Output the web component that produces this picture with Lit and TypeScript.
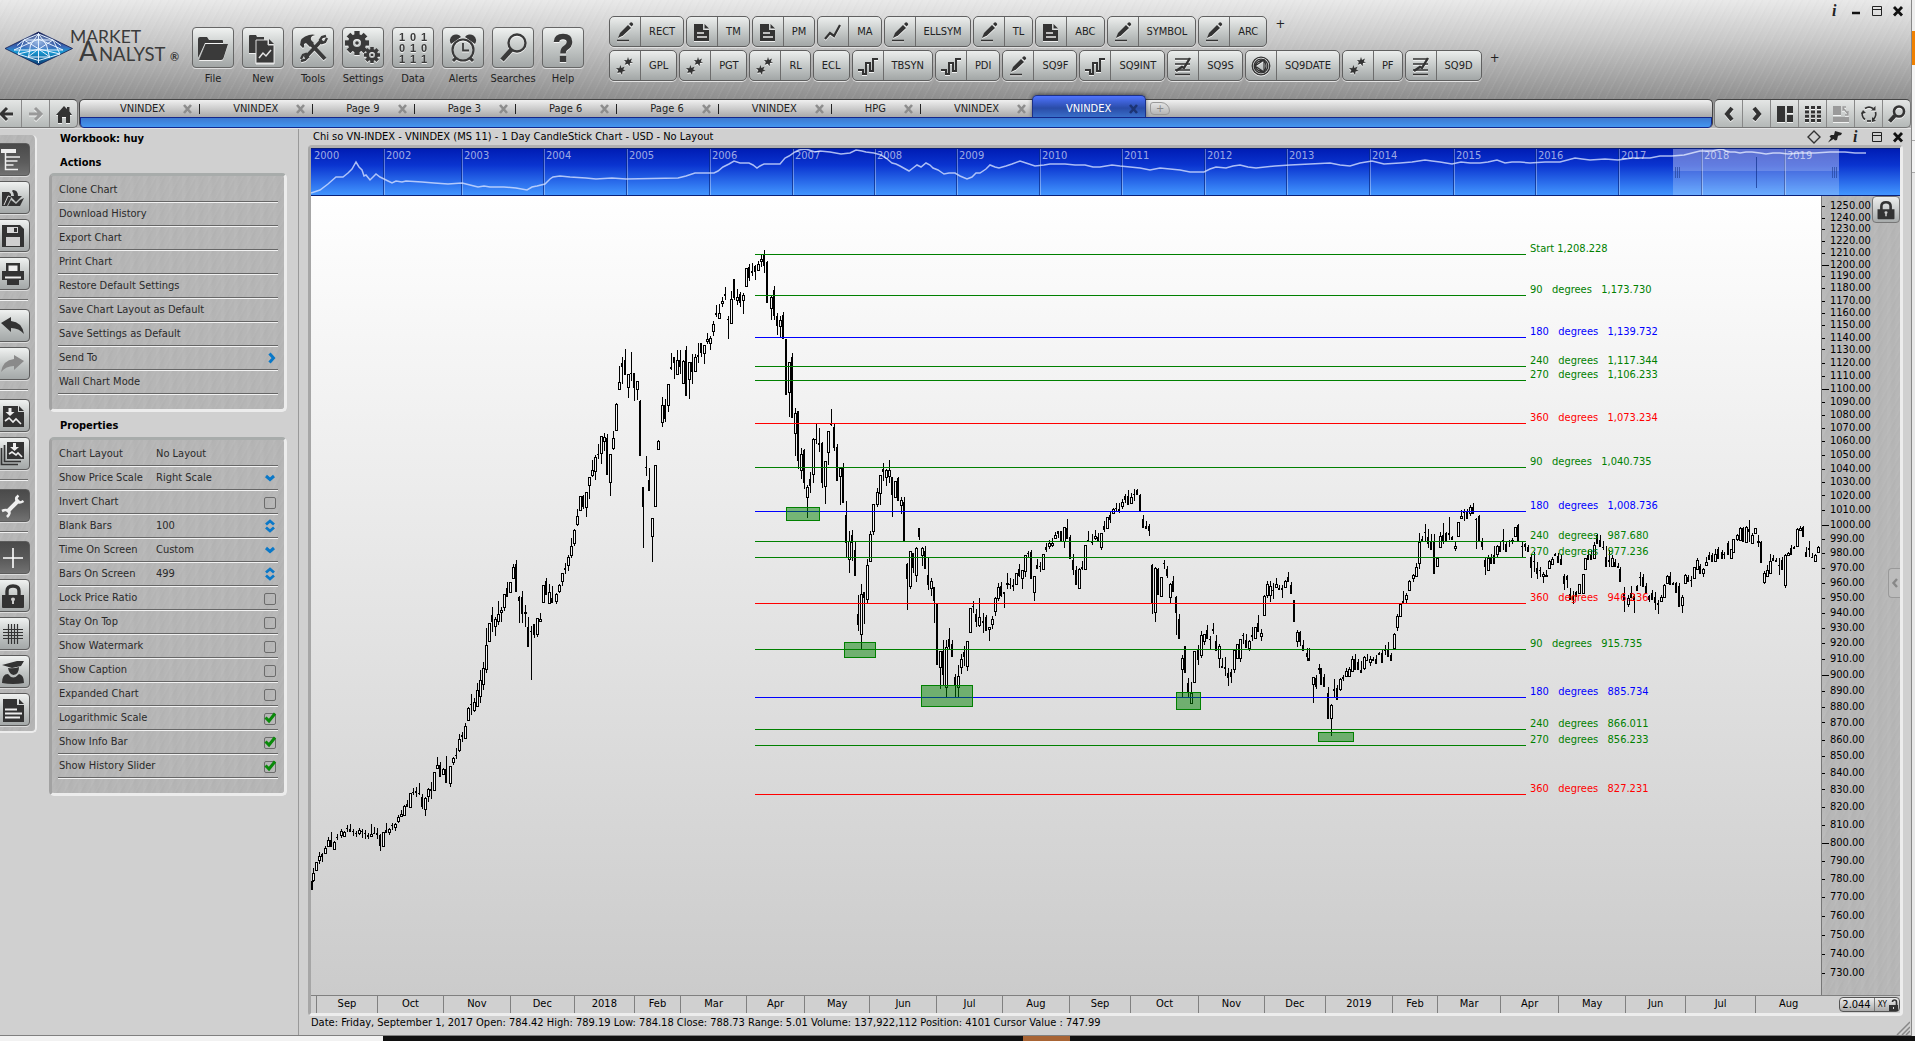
import { LitElement, html, svg, css, nothing, TemplateResult } from "lit";
import { customElement } from "lit/decorators.js";
import { classMap } from "lit/directives/class-map.js";
import { styleMap } from "lit/directives/style-map.js";

/* ---------- icons ---------- */

const icon = (w: number, h: number, body: unknown, box = `0 0 ${w} ${h}`) =>
  html`<svg class="ico" width=${w} height=${h} viewBox=${box} aria-hidden="true">${body}</svg>`;

const cog = (cx: number, cy: number, r: number, hole: number, teeth: number) => {
  const out = [];
  for (let i = 0; i < teeth; i++) {
    out.push(svg`<rect x=${cx - r * 0.22} y=${cy - r} width=${r * 0.44} height=${r * 0.5}
      transform=${`rotate(${(360 / teeth) * i} ${cx} ${cy})`} />`);
  }
  return svg`<g fill="#3a3a3a">${out}</g>
    <circle cx=${cx} cy=${cy} r=${(r * 0.76 + hole) / 2} fill="none" stroke="#3a3a3a" stroke-width=${r * 0.76 - hole} />
    <circle cx=${cx} cy=${cy} r=${hole * 0.45} fill="#3a3a3a" />`;
};

const I: Record<string, TemplateResult> = {
  file: icon(32, 32, svg`<path fill="#3a3a3a" d="M1 7q0-2 2-2h7l2 3h13q1 0 1 1v2H8L3 22 1 26z"/><path fill="#3a3a3a" d="M8.500 12H31L26.500 26q-.5 2-2.500 2H2z"/>`),
  fresh: icon(32, 32, svg`<path fill="#3a3a3a" d="M2 4q0-1 1-1h6l1 2h7v4h-6v12H2z"/><path fill="#3a3a3a" stroke="#ddd" stroke-width="1" d="M9 8h12v5h6v18H9z"/><path fill="#3a3a3a" d="M22 7l5 5h-5z"/><path fill="none" stroke="#e6e6e6" stroke-width="1.500" d="M12 26l4-5 3 3 5-6"/>`),
  tools: icon(32, 32, svg`<g fill="none" stroke="#3a3a3a"><path stroke-width="4" d="M13 11L28 27"/><path stroke-width="3.600" d="M25 8L8 26"/><path stroke-width="2.400" d="M29 4l-4 1-2 3 2 3 3-1 2-4M4 29l4-1 3-3-2-3-3 1-2 4"/></g><path fill="#3a3a3a" d="M3 13q0-8 9-10 4-1 6 0-5 1-4 5l3 3-4 4-4-4-2 1v3l-1 1z"/>`),
  settings: icon(36, 34, svg`${cog(12, 12, 12, 4, 8)}${cog(27, 24, 8, 3, 8)}`),
  data: icon(32, 34, svg`<g fill="#3a3a3a" font-family="Liberation Sans, sans-serif" font-weight="700" font-size="11" text-anchor="middle"><text x="5" y="10">1</text><text x="16" y="10">0</text><text x="27" y="10">1</text><text x="5" y="21">0</text><text x="16" y="21">1</text><text x="27" y="21">0</text><text x="5" y="32">1</text><text x="16" y="32">1</text><text x="27" y="32">1</text></g>`),
  alerts: icon(32, 32, svg`<circle cx="16" cy="18" r="10.500" fill="none" stroke="#3a3a3a" stroke-width="2.200"/><path fill="none" stroke="#3a3a3a" stroke-width="1.800" d="M16 11v7.500h6"/><path fill="#3a3a3a" d="M4 12a6 6 0 0 1 10-7zM28 12a6 6 0 0 0-10-7z"/><path stroke="#3a3a3a" stroke-width="3" d="M6 29l3-3M26 29l-3-3"/>`),
  search: icon(32, 32, svg`<circle cx="20" cy="11" r="8.500" fill="none" stroke="#3a3a3a" stroke-width="2.400"/><path stroke="#3a3a3a" stroke-width="4.600" d="M5 28l10-11"/>`),
  help: icon(32, 32, svg`<path fill="none" stroke="#3a3a3a" stroke-width="5.600" d="M9.500 10Q9.500 4.500 16 4.500T22.500 10q0 3.500-4 6-2.500 1.500-2.500 5.500"/><path fill="#3a3a3a" d="M12.800 24h6.400v6h-6.400z"/>`),
  pencil: icon(20, 20, svg`<path fill="#333" d="M3 16l2-5 8-8 3 3-8 7.500z"/><path fill="#333" d="M14 2l1.500-1.500q1-.5 2 .5t.5 2L16.500 4.500z"/><path stroke="#333" stroke-width="1.500" d="M2 18.500h12"/>`),
  note: icon(20, 20, svg`<path fill="#333" d="M2 2h9v6h6v11H2z"/><path fill="#333" d="M12.500 2l4.500 4.500h-4.500z"/><path stroke="#eee" stroke-width="1.500" d="M5 11h7M5 15h10"/>`),
  zigzag: icon(20, 20, svg`<path fill="none" stroke="#333" stroke-width="2.200" d="M2 17l5-6 4 3 6-11"/>`),
  stars: icon(20, 20, svg`<path fill="#333" d="M13 1l1 3 3-1.500-1.200 3L18 6.500l-3 .6-.5 3.400-1.700-2.700-3 1 1-2.900L9 4l3 .2zM5.500 9l.8 3 3.200-1.200-1.200 2.700L10.500 15l-2.900.6L7 19l-1.700-2.700L2.300 17l1-2.700L1 12l3.300.2z"/>`),
  square: icon(22, 20, svg`<path fill="none" stroke="#333" stroke-width="2" d="M1 14h5v4h3V7h4v8h3V3h5"/>`),
  levels: icon(20, 20, svg`<path stroke="#333" stroke-width="1.400" d="M2 3h15M2 8h15M2 14h15M2 18.500h15"/><path fill="none" stroke="#333" stroke-width="2.400" d="M3 15l6-4 2 1 6-10"/>`),
  orbit: icon(20, 20, svg`<g fill="none" stroke="#333" stroke-width="1.300"><circle cx="10" cy="10" r="8.800"/><circle cx="10" cy="10" r="6.800"/><path d="M4 10l9-6v12zM13 4q4 6 0 12M4 10q1-5 9-6M4 10q1 5 9 6"/></g>`),
  info: icon(12, 14, svg`<text x="3" y="12" fill="#222" font-family="Liberation Serif, serif" font-style="italic" font-weight="700" font-size="16">i</text>`),
  min: icon(12, 14, svg`<path stroke="#111" stroke-width="2.500" d="M2 9h8"/>`),
  max: icon(12, 14, svg`<path fill="none" stroke="#222" d="M1.500 2.500h9v9h-9zM1 5.500h10"/>`),
  close: icon(12, 14, svg`<path stroke="#111" stroke-width="2.800" d="M2 3l8 8.500M10 3l-8 8.500"/>`),
  diamond: icon(14, 14, svg`<path fill="none" stroke="#333" stroke-width="1.400" d="M7 1l6 6-6 6-6-6z"/>`),
  pin: icon(16, 14, svg`<path fill="#222" d="M8 1l7 2-1 2-3 .8-1 4.200-2 .5L6.500 9 1 12.500 4 8 2.500 6.500 4 5h3z"/>`),
  back: icon(16, 18, svg`<path fill="none" stroke="#333" stroke-width="3" d="M9 3L3 9l6 6M3 9h12"/>`),
  fwd: icon(16, 18, svg`<path fill="none" stroke="#999" stroke-width="3" d="M7 3l6 6-6 6M13 9H1"/>`),
  home: icon(18, 18, svg`<path fill="#333" d="M9 1l3 3V2h2.500v4.500L17 10h-2v8h-4v-6H7v6H3v-8H1z"/>`),
  left: icon(14, 18, svg`<path fill="none" stroke="#333" stroke-width="4" d="M10 3L5 9l5 6"/>`),
  right: icon(14, 18, svg`<path fill="none" stroke="#333" stroke-width="4" d="M4 3l5 6-5 6"/>`),
  tiles: icon(18, 16, svg`<path fill="#333" d="M1 0h8v16H1zM11 0h6v7h-6zM11 9h6v7h-6z"/>`),
  grid: icon(18, 16, svg`<path fill="#333" d="M1 0h4v3H1zM7 0h4v3H7zM13 0h4v3h-4zM1 4.400h4v3H1zM7 4.400h4v3H7zM13 4.400h4v3h-4zM1 8.700h4v3H1zM7 8.700h4v3H7zM13 8.700h4v3h-4zM1 13h4v3H1zM7 13h4v3H7zM13 13h4v3h-4z"/>`),
  snap: icon(18, 16, svg`<path fill="#9a9a9a" d="M1 0h8v9H1zM1 11h16v5H1z"/><path fill="none" stroke="#9a9a9a" stroke-width="1.300" d="M11 2l5 6M11 5V1h3M16 5v4h-3"/>`),
  cycle: icon(18, 18, svg`<g fill="none" stroke="#333" stroke-width="1.700"><path d="M5 3.500a7 7 0 0 1 8 0M15.500 7a7 7 0 0 1-2.500 7.500M2.500 7A7 7 0 0 0 5 14.500"/><path d="M7 16h4"/></g><path fill="#333" d="M11 5.500h4.500V1zM12 12v5l4-1zM1 9l2-4 3 3z"/>`),
  find: icon(18, 18, svg`<circle cx="11" cy="6.500" r="5" fill="none" stroke="#333" stroke-width="2.600"/><path stroke="#333" stroke-width="4" d="M1.500 16.500L7 10.500"/>`),
  tree: icon(26, 24, svg`<path fill="#eee" d="M1 1h15v4H1z"/><path fill="none" stroke="#eee" stroke-width="1.500" d="M5.500 5v16.500H18M5.500 9H20M5.500 13h12M5.500 17h8"/>`),
  export: icon(26, 24, svg`<path fill="#333" d="M2 6h7l2 2v4l-4 8H2z"/><path fill="none" stroke="#ddd" stroke-width="1" d="M4 19l4-9 4 1 2 4"/><path fill="#333" d="M13 4q5 0 5 6h4l-6 6-6-6h4q0-3-2-5zM11 14l5 4 4-4 4-2-4 8H8z"/>`),
  save: icon(26, 24, svg`<path fill="#333" d="M2 1h18l4 4v18H2z"/><path fill="#d8d8d8" d="M7 3h11v6H7z"/><path fill="#333" d="M14 4h3v4h-3z"/><path fill="#cfcfcf" d="M6 13h14v9H6z"/>`),
  print: icon(26, 24, svg`<path fill="#333" d="M6 1h14v8h4v9H2V9h4z"/><path fill="#eee" d="M8.500 3.500h9V9h-9zM5 14.500h16v2H5z"/><path fill="#333" d="M7 17h12v6H7z"/>`),
  undo: icon(26, 24, svg`<path fill="#333" d="M1 9l10-6v4q11 1 13 13-5-6-13-6v4z"/>`),
  redo: icon(26, 24, svg`<path fill="#8a8a8a" d="M24 9L14 3v4Q3 8 1 20q5-6 13-6v4z"/>`),
  down: icon(26, 24, svg`<path fill="#333" d="M3 2h15v6h6v15H3zM19 2l5 5h-5z"/><path fill="#eee" d="M8.500 4h3v4h3L10 12 5.500 8h3z"/><path fill="none" stroke="#eee" stroke-width="1.600" d="M5 17l4-3 4 4 3-3 5 5"/>`),
  downall: icon(26, 24, svg`<path fill="none" stroke="#333" stroke-width="1.700" d="M1.500 6v16.500H18M4.500 3v16.500H21"/><path fill="#333" d="M7 0h17v17H7z"/><path fill="#eee" d="M13 1h3v4h3l-4.500 4L10 5h3z"/><path fill="none" stroke="#eee" stroke-width="1.600" d="M9 12l3-2 4 3 2-2 4 4"/>`),
  wrench: icon(26, 24, svg`<path stroke="#eee" stroke-width="4" d="M7 18L19 6"/><path fill="none" stroke="#eee" stroke-width="2.600" d="M18.500 1.500Q15 4 17 7t6.500 0M2 17q4-2 6.500 0T7 23"/>`),
  plus: icon(26, 24, svg`<path stroke="#fff" stroke-width="1.600" d="M3 12h20M13 2v20"/>`),
  lock: icon(26, 24, svg`<path fill="none" stroke="#333" stroke-width="3.400" d="M7 12V7q0-5 6-5t6 5v5"/><path fill="#333" d="M2 11h22v12q0 1-1 1H3q-1 0-1-1z"/><path fill="#ccc" d="M11 15q0-1.500 2-1.500t2 1.500-1 2v3h-2v-3q-1-.5-1-2z"/>`),
  mesh: icon(26, 24, svg`<path stroke="#333" stroke-width="1.200" d="M3 7.500h20M3 10.500h20M3 13.500h20M3 16.500h20M8.500 2v20M11.500 2v20M14.500 2v20M17.500 2v20"/>`),
  grad: icon(26, 24, svg`<path fill="#333" d="M2 5l15-4h7l-3 5-9 2zM8 8q6 1 11-1 0 7-5.500 8Q9 14 8 8zM2 23q0-9 6-9 5 7 11 0 5 1 5 9-11 2-22 0z"/>`),
  page: icon(26, 24, svg`<path fill="#333" d="M3 1h14v6h7v17H3zM19 1l5 5h-5z"/><path stroke="#eee" stroke-width="1.800" d="M5 11.500h12M5 15.500h17M5 19.500h15"/>`),
  chevR: icon(10, 12, svg`<path fill="none" stroke="#0a78c8" stroke-width="3" d="M2.500 1.500L6.500 6l-4 4.500"/>`),
  chevD: icon(12, 12, svg`<path fill="none" stroke="#0a78c8" stroke-width="3" d="M2 4l4 3.500L10 4"/>`),
  spin: icon(10, 14, svg`<path fill="none" stroke="#0a78c8" stroke-width="2.800" d="M1 5.500L5 2l4 3.500M1 8.500L5 12l4-3.500"/>`),
  tick: icon(12, 12, svg`<path fill="none" stroke="#0a8a0a" stroke-width="3" d="M1.500 5.500l3.500 3.500 6-7.500"/>`),
  x: icon(12, 12, svg`<path class="xs" stroke="#8d8d8d" stroke-width="2.600" d="M2 2l7 8M9 2l-7 8"/>`),
};

/* ---------- data ---------- */

const TOOLS = [
  ["File", "file"], ["New", "fresh"], ["Tools", "tools"], ["Settings", "settings"],
  ["Data", "data"], ["Alerts", "alerts"], ["Searches", "search"], ["Help", "help"],
];

const QUICK = [
  [["RECT", "pencil"], ["TM", "note"], ["PM", "note"], ["MA", "zigzag"], ["ELLSYM", "pencil"], ["TL", "pencil"], ["ABC", "note"], ["SYMBOL", "pencil"], ["ARC", "pencil"]],
  [["GPL", "stars"], ["PGT", "stars"], ["RL", "stars"], ["ECL", ""], ["TBSYN", "square"], ["PDI", "square"], ["SQ9F", "pencil"], ["SQ9INT", "square"], ["SQ9S", "levels"], ["SQ9DATE", "orbit"], ["PF", "stars"], ["SQ9D", "levels"]],
];

const TABS = ["VNINDEX", "VNINDEX", "Page 9", "Page 3", "Page 6", "Page 6", "VNINDEX", "HPG", "VNINDEX", "VNINDEX"];

const STRIP = [
  ["tree!", "export", "save", "print"], ["undo", "redo"], ["down", "downall"], ["wrench!"],
  ["plus!", "lock", "mesh", "grad", "page"],
];

const ACTIONS = ["Clone Chart", "Download History", "Export Chart", "Print Chart", "Restore Default Settings", "Save Chart Layout as Default", "Save Settings as Default", "Send To", "Wall Chart Mode"];

type Prop = { label: string; kind: "text" | "select" | "number" | "check"; value: string };
const PROPS: Prop[] = [
  { label: "Chart Layout", kind: "text", value: "No Layout" },
  { label: "Show Price Scale", kind: "select", value: "Right Scale" },
  { label: "Invert Chart", kind: "check", value: "" },
  { label: "Blank Bars", kind: "number", value: "100" },
  { label: "Time On Screen", kind: "select", value: "Custom" },
  { label: "Bars On Screen", kind: "number", value: "499" },
  { label: "Lock Price Ratio", kind: "check", value: "" },
  { label: "Stay On Top", kind: "check", value: "" },
  { label: "Show Watermark", kind: "check", value: "" },
  { label: "Show Caption", kind: "check", value: "" },
  { label: "Expanded Chart", kind: "check", value: "" },
  { label: "Logarithmic Scale", kind: "check", value: "on" },
  { label: "Show Info Bar", kind: "check", value: "on" },
  { label: "Show History Slider", kind: "check", value: "on" },
];

/* Plot space shared by the price pane: origin and extent in drawing units. */
const PX = 311, PY = 196, PW = 1510, PH = 799;
const pct = (v: number, from: number, span: number) => `${((v - from) / span) * 100}%`;
const priceY = (p: number) => 206.3 + 1426 * Math.log(1250 / p);

const LEVELS: [number, string, string][] = [
  [254, "green", "Start 1,208.228"], [295, "green", "90   degrees   1,173.730"], [337, "blue", "180   degrees   1,139.732"],
  [366, "green", "240   degrees   1,117.344"], [380, "green", "270   degrees   1,106.233"], [423, "red", "360   degrees   1,073.234"],
  [467, "green", "90   degrees   1,040.735"], [511, "blue", "180   degrees   1,008.736"], [541, "green", "240   degrees   987.680"],
  [557, "green", "270   degrees   977.236"], [603, "red", "360   degrees   946.236"], [649, "green", "90   degrees   915.735"],
  [697, "blue", "180   degrees   885.734"], [729, "green", "240   degrees   866.011"], [745, "green", "270   degrees   856.233"],
  [794, "red", "360   degrees   827.231"],
];
const INK: Record<string, string> = { green: "#008000", blue: "#0000ff", red: "#ff0000" };

const ZONES = [[786, 507, 33, 13], [844, 642, 31, 15], [921, 685, 51, 21], [1176, 692, 24, 17], [1318, 732, 35, 9]];

const MONTHS: [string, number][] = [
  ["", 5], ["Sep", 61], ["Oct", 66], ["Nov", 67], ["Dec", 64], ["2018", 60], ["Feb", 46], ["Mar", 66], ["Apr", 58], ["May", 65],
  ["Jun", 67], ["Jul", 66], ["Aug", 67], ["Sep", 61], ["Oct", 68], ["Nov", 66], ["Dec", 61], ["2019", 67], ["Feb", 45],
  ["Mar", 63], ["Apr", 58], ["May", 67], ["Jun", 60], ["Jul", 70], ["Aug", 66],
];

const YEARS: [string, number][] = [
  ["2000", 311], ["2002", 383], ["2003", 461], ["2004", 543], ["2005", 626], ["2006", 709], ["2007", 792], ["2008", 874], ["2009", 956],
  ["2010", 1039], ["2011", 1121], ["2012", 1204], ["2013", 1286], ["2014", 1369], ["2015", 1453], ["2016", 1535], ["2017", 1618], ["2018", 1701], ["2019", 1784],
];
const HX = 311, HW = 1589;
const HISTORY = "311,193 320,190 328,184 336,177 343,177 348,173 352,169 356,162 359,167 362,170 364,176 366,175 370,180 373,177 376,174 380,177 384,179 388,181 392,183 396,181 402,182 406,181 422,182 434,183 448,184 462,183 470,185 478,187 484,186 490,187 504,187 516,188 527,190 532,187 537,186 545,184 550,179 553,177 560,176 570,177 586,178 596,179 612,178 626,179 678,178 686,176 695,173 700,173 714,173 718,171 723,167 729,164 734,161 740,163 749,163 753,165 757,168 760,166 764,164 772,164 780,164 785,158 789,156 795,152 799,150 805,149 809,150 815,152 820,151 830,152 841,154 850,153 856,150 862,151 866,152 874,153 881,155 886,158 892,163 896,164 900,166 909,171 913,168 917,165 921,167 926,163 930,165 933,168 938,170 941,172 944,174 949,173 955,173 960,176 967,179 972,177 976,173 980,173 986,169 990,165 995,167 999,168 1006,166 1012,164 1020,161 1026,163 1035,166 1044,165 1050,164 1065,164 1075,165 1085,165 1093,167 1100,167 1112,165 1120,166 1130,167 1140,168 1150,170 1160,168 1170,169 1180,170 1190,172 1204,172 1210,169 1216,167 1226,168 1233,166 1240,165 1248,167 1256,168 1275,166 1290,165 1310,164 1330,163 1340,165 1350,166 1360,163 1372,161 1384,164 1400,163 1412,162 1425,160 1432,161 1440,162 1446,163 1452,164 1461,162 1470,163 1480,163 1488,162 1497,160 1505,163 1512,162 1520,162 1530,163 1545,162 1560,162 1575,158 1582,159 1590,160 1605,159 1618,160 1632,158 1650,158 1660,156 1672,156 1684,155 1692,153 1700,151 1712,151 1717,150 1722,149 1726,151 1730,152 1735,152 1740,153 1746,152 1752,152 1760,153 1766,154 1773,153 1780,153 1788,154 1800,153 1815,153 1830,152 1845,152 1855,153 1866,153";

/*
 * Candle runs. Each entry reads "x high top bottom low" in the run's own units
 * (high or low may be left out when it meets the body); a trailing "h" marks a rising bar.
 */
type Run = { ox: number; oy: number; sx: number; bars: string };
const RUNS: Run[] = [
  { ox: 300, oy: 700, sx: 2.8, bars: `
34 543 543 570|37 504 519 542 545 h|46 486 486 512 h|54 457 469 482 492 h|63 460 463 470 486|71 437 445 463 h|80 411 420 440 h|88 396 420 440|97 423 427 451 h|105 402 411 413 420|117 387 394 409 413 h|125 394 397 411 h|133 375 383 384 396|141 372 386 395|149 387 392 395 407|158 394 400 403 410|166 384 389 402 405 h|175 387 394 395 414|183 390 399 402 416|191 398 405 410 417|200 373 403 412 h|208 382 398 401|216 384 399 405 416|225 403 404 437 452|234 396 397 442 h|242 369 391 399|250 384 386 398 404 h|259 370 376 377 390|267 370 372 383 392 h|276 346 352 367 370 h|284 331 343 352 h|292 315 317 349 h|300 300 313 322|310 279 280 325 h|318 264 276 278 284|326 261 273 278 290|335 249 278 280 284|342 283 290 320 327|351 292 295 331 347 h|360 264 266 290 305 h|368 246 267 272 298|377 216 217 274 h|385 171 194 206 h|392 187 195 230|402 205 206 226 h|410 168 208 250|421 198 199 253 260 h|430 171 173 188 196 h|439 145 166 168 178|447 102 118 152 156 h|455 96 106 112 127|463 70 77 118 h|472 21 23 62 h|480 -18 11 14 44|488 -5 6 32 36 h|497 -50 -30 20 h|505 -90 -60 -10 10 h|514 -115 -95 -45 -30 h` },
  { ox: 300, oy: 240, sx: 2.8, bars: `
522 1163 1216 1290 1300 h|530 1150 1150 1205 h|539 1101 1125 1145 1176|547 1130 1137 1162 1188 h|556 1083 1122 1147 1155 h|564 1101 1111 1120 1146 h|572 1062 1063 1103 1112 h|580 1026 1045 1070|589 1026 1027 1060 h|598 972 982 1016 h|606 960 972 1055|614 1068 1072 1082 1149|622 1053 1071 1122 1149|631 1095 1117 1123 1160 h|639 1131 1160 1221|648 1158 1173 1175 1320|656 1152 1153 1185 1193|665 1134 1135 1184 1190 h|673 1119 1138 1147 h|682 1035 1036 1090 h|690 1014 1022 1064|698 1032 1057 1093 h|706 1038 1075 1088|718 1059 1063 1085 1092 h|726 1032 1036 1055 1059 h|735 999 1000 1027 1038 h|743 969 984 990 1002|751 945 951 979 992 h|760 894 919 947 954 h|769 867 871 913 917 h|777 807 829 854 858 h|785 768 769 814 h|793 765 768 800 807|802 756 757 805 831 h|811 711 712 739 777 h|819 660 691 707 711 h|828 645 652 697 720 h|836 612 642 645 657|844 588 589 643 672 h|853 579 592 607 633 h|861 582 594 705|870 642 643 730 768 h|878 573 595 626 630 h|886 489 493 574 h|894 378 427 451 h|902 351 368 382 432|911 327 360 404|920 402 403 445 474 h|928 336 399 402 423|936 399 400 445 483|945 423 424 451 480 h|953 480 483 648|961 741 742 800 924|970 648 682 684 708|978 684 720 753|987 834 835 892 966 h|996 675 676 802 h|1004 600 604 631 h|1015 471 496 550 561 h|1023 477 495 537 546|1032 432 433 497 516 h|1040 339 381 386 390|1048 350 352 368 417|1057 330 361 406 h|1065 330 361 380 402|1074 360 364 433 h|1082 318 330 468|1090 366 367 421 477 h|1099 342 366 395 432|1107 342 352 397 h|1115 309 345 350 369|1124 309 310 340 351|1132 315 316 343 372 h|1141 279 298 307 311 h|1149 288 295 313 330 h|1158 243 253 275 288 h|1166 195 220 224 231|1174 192 220 238 h|1183 171 184 193 201 h|1191 141 162 167 180|1199 228 237 240 297|1208 153 176 253 h|1216 117 118 174 180|1225 147 172 184 196 h|1233 156 162 188 202|1242 159 164 184 222 h|1250 84 85 142 h|1258 72 82 115 124|1266 69 93 100 108|1275 75 78 95 120|1284 63 73 94 h|1292 42 58 66 80 h|1300 30 42 77 99|1308 63 66 189|1321 168 170 208 240 h|1328 138 150 228 240|1336 219 228 258 285|1345 228 241 260 291 h|1353 216 225 297|1361 297 297 465|1371 366 367 460 531 h|1378 339 351 534|1388 504 520 583 648 h|1396 513 514 662 687|1405 624 643 694 717 h|1412 627 630 730 747|1421 735 742 775 834 h|1429 696 717 738 759|1438 594 596 706 729 h|1446 551 597 600 612|1454 564 609 614 636|1462 606 608 728 744|1471 663 664 742 792 h|1480 573 574 638 675 h|1488 507 551 554 558|1496 549 561 624 633|1504 612 621 723|1514 681 683 712 795 h|1521 669 683 789|1530 783 825 910 951|1538 873 902 961 999 h|1547 870 885 910 963|1555 903 930 1008|1563 1065 1122 1155 1173` },
  { ox: 740, oy: 240, sx: 2.8, bars: `
340 1032 1063 1184 1228 h|348 1056 1057 1075 1152|357 957 976 1081 1090 h|366 873 883 967 h|374 792 793 877 885 h|385 744 757 796 801 h|393 705 706 763 795 h|401 669 687 696 723|410 687 689 715 738 h|419 660 689 712 729 h|427 711 712 765 831|435 723 724 775 h|443 711 714 784|452 771 781 799 822 h|460 771 786 906|468 969 972 1017 1110|478 933 934 1040 1047 h|486 939 940 985 999|494 921 925 1009 1026 h|502 864 865 891 900|511 921 925 949 978 h|519 918 933 987|527 951 1005 1035 1050|536 1014 1024 1048 1068 h|544 1041 1042 1083 1149|552 1089 1090 1275|561 1233 1234 1283 1347 h|569 1200 1232 1305 1338|578 1200 1222 1345 1372 h|586 1164 1198 1222 1230|594 1200 1213 1251|603 1302 1310 1335 1372|612 1275 1309 1345 1372 h|620 1242 1258 1283 1302 h|628 1218 1236 1250 1278|637 1203 1204 1280 1293 h|646 1104 1105 1180 h|654 1083 1098 1101 1119|662 1107 1122 1146 1161|670 1074 1132 1157 1161 h|682 1119 1142 1148 1179|690 1125 1132 1172|698 1161 1162 1169 1203 h|707 1128 1138 1154 1167 h|715 1071 1073 1115 1128 h|724 1029 1042 1078 1083 h|732 1026 1038 1068 1071|741 1056 1057 1061 1104|749 999 1030 1036 1047 h|757 1014 1032 1035 1047|765 1017 1036 1041 1053|774 999 1000 1036 h|782 972 988 1008 1011|791 990 991 1018 1047 h|800 945 946 997 1011 h|807 933 940 943 950|816 930 936 1018|825 1008 1009 1060 1083 h|832 957 975 986|841 966 978 981 996|850 942 943 991 h|858 909 921 930 936|866 900 908 922 927 h|874 894 908 917 922 h|883 876 885 898 h|891 873 874 882 894|899 873 874 903|908 861 862 906 924 h|916 837 864 897|924 885 891 957|933 942 960 990 1005|941 978 990 1035|950 984 988 1048 h|959 963 981 986 990|968 915 916 991 h|976 873 900 903 905|987 882 904 908 915|995 870 889 896 900 h|1003 879 891 903|1012 879 880 925 930 h|1020 843 858 870 876|1029 831 832 868 h|1037 813 825 840 849|1046 804 806 821 h|1054 789 804 807 812|1062 789 808 812 818|1071 777 787 800 806 h|1079 762 768 780 789|1087 750 768 795|1096 759 772 793 h|1104 747 762 766 783|1112 747 750 765|1120 762 765 813|1129 825 837 865|1138 843 858 866|1146 852 858 873 888|1154 972 974 1089 1122|1163 981 983 1120 1146 h|1171 984 987 1064|1180 1011 1012 1070 h|1188 960 969 973 987|1196 978 988 1008 1014|1205 1029 1033 1073 1090 h|1213 1008 1023 1056|1221 1068 1072 1118 1185|1230 1122 1137 1197|1239 1245 1255 1291 1372 h|1247 1218 1219 1299|1255 1314 1328 1357 1372|1264 1326 1358 1393 h|1272 1233 1234 1330 h|1283 1215 1230 1260 1275|1292 1173 1186 1249 1254 h|1300 1182 1183 1205 1216 h|1308 1155 1170 1198|1317 1188 1198 1201 1229|1325 1149 1167 1172 1182|1333 1185 1204 1234|1342 1212 1219 1258 1284 h|1350 1254 1278 1284|1359 1251 1282 1287 1308|1367 1284 1298 1315 1338|1376 1287 1296 1312 1329|1385 1230 1231 1291 1299 h|1393 1212 1213 1258 h|1402 1197 1198 1258 1266 h|1409 1179 1184 1189 1212|1418 1182 1200 1224|1426 1200 1204 1227 1233 h|1434 1161 1186 1190 1202|1443 1161 1162 1198 h|1451 1125 1150 1176|1460 1167 1180 1190 1203 h|1468 1065 1067 1129 h|1477 1023 1033 1067 1074 h|1485 1023 1039 1069 1086 h|1494 1029 1050 1053 1077|1502 1014 1033 1043 h|1510 1035 1045 1049|1519 1035 1045 1049 1074|1527 1020 1022 1045 h|1535 996 1011 1026|1544 1026 1035 1062|1552 1080 1081 1146` },
  { ox: 1200, oy: 440, sx: 2.193, bars: `
214 570 576 605 621 h|220 573 576 606 618|227 600 616 633|235 625 640 651 663|241 625 655 662|249 711 712 734 789 h|256 705 714 740 746|262 672 685 690 703|267 684 685 735|274 702 712 742|281 741 760 836|288 792 796 836 887 h|295 717 748 754 771|301 735 745 780|308 714 718 751 754 h|315 705 710 717 724|321 684 693 711 h|328 682 687 711 h|334 648 658 697 h|341 642 656 690|347 657 666 690|354 663 690 699|361 648 652 687 690 h|368 642 660 664|374 648 656 668 678 h|381 651 657 664|388 645 657 672|394 636 640 644|400 627 640 668|407 615 627 633 645|413 606 627 651|420 639 645 663|426 579 581 628 h|433 522 528 563 573 h|440 492 493 530 h|446 453 482 489 492|453 459 466 479 490 h|460 420 422 452 h|468 402 406 417 425 h|475 369 380 412 h|481 279 305 371 387 h|488 288 298 306|494 252 276 280 303|501 267 290 312 324|508 282 302 330|514 282 305 402|521 351 354 380 h|528 276 288 325 h|534 249 284 305 312|541 276 280 303|547 231 279 284 300|554 288 290 300|560 303 318 326 333 h|567 246 247 292 h|573 211 228 237 h|580 207 215 218 243|587 207 215 237|593 195 200 222 228 h|599 189 200 222|606 234 236 240 327|612 225 228 303|619 294 303 321 330|626 351 360 380 405|633 345 355 394 h|640 342 352 372|646 318 345 372|652 315 318 344 351 h|659 303 318 336|665 267 300 305 330|672 303 312 335|679 300 303 306 321|686 294 300 306 312 h|692 261 262 290 h|699 252 255 303|707 305 318 320 351|714 309 312 321 333|720 315 322 336|727 345 350 384 414|733 336 363 366 395|740 366 385 402 417|747 381 390 394 410|753 396 401 411 429 h|760 390 405 411 h|767 360 364 387 h|774 351 358 375 h|780 339 342 348|786 339 348 370|793 345 358 375|800 402 408 432 450|806 405 408 420 444|812 444 462 480|819 453 468 480 492|826 453 456 470|833 432 433 462 h|840 402 403 463 h|846 354 355 390 h|852 330 345 360|859 330 345 360|865 306 315 357 h|872 282 285 312|878 285 300 320|885 303 320 324 330|891 318 350 381|898 330 360 366 380|904 345 355 380 h|911 357 367 380|918 369 378 384|923 380 388 426|931 440 460 484 515|940 465 475 494 500 h|946 438 460 475|953 462 468 480 519|960 435 438 453|966 396 410 414 438|972 402 410 440|979 430 438 462|985 465 468 480 486|992 450 458 480|999 456 470 490 510|1005 480 490 495 522|1012 466 470 486 h|1019 432 436 473 h|1026 405 408 432 h|1032 396 408 435|1038 426 428 435|1045 426 430 460|1051 430 438 500|1058 465 472 497 519 h|1065 402 405 433 h|1071 405 410 425|1078 408 420 424 440|1085 381 382 418 h|1091 354 360 390 h|1098 372 378 402|1105 384 388 402 412 h|1111 350 366 378 h|1118 336 345 360|1125 339 345 366|1131 327 342 365 h|1138 321 327 357|1145 330 336 357|1151 336 342 346 357|1158 303 310 345|1165 327 328 357 h|1171 297 298 340 h|1178 282 285 300 304 h|1185 261 264 302 h|1191 261 265 305|1198 258 262 310 h|1204 240 268 276 306|1211 280 285 312 h|1218 264 265 283 h|1225 285 303 309 320 h|1231 303 306 370|1238 393 400 428 433 h|1245 375 390 411 h|1251 342 362 402 h|1258 346 355 362|1265 354 360 366|1271 354 375 378 405|1278 351 360 390|1284 342 345 438 444 h|1291 336 340 348 h|1297 315 324 345|1304 318 320 326|1310 264 266 322 h|1317 258 264 272 h|1323 258 262 291|1330 320 335 351|1336 303 325 330 351|1343 340 350 352|1350 342 345 366 h|1357 318 321 339 h` },
];

/* Turns the candle runs into two path strings: solid marks and open (rising) bodies. */
function candlePaths() {
  let solid = "";
  let open = "";
  for (const run of RUNS) {
    for (const raw of run.bars.trim().split("|")) {
      const parts = raw.trim().split(" ");
      const rising = parts[parts.length - 1] === "h";
      const n = (rising ? parts.slice(0, -1) : parts).map(Number);
      const x = Math.floor(run.ox + n[0] / run.sx);
      const [hi, top, bot, lo] = [n[1], n[2], n[3], n[4] ?? n[3]].map((v) => Math.round(run.oy + v / 3));
      if (rising && bot - top >= 2) {
        solid += `M${x} ${hi}h1V${top}h-1z`;
        if (lo > bot) solid += `M${x} ${bot}h1V${lo}h-1z`;
        open += `M${x - 0.5} ${top + 0.5}h2V${bot - 0.5}h-2z`;
      } else {
        solid += `M${x} ${hi}h1V${Math.max(lo, hi + 1)}h-1z`;
        solid += `M${x - 1} ${top}h2V${Math.max(bot, top + 1)}h-2z`;
      }
    }
  }
  return { solid, open };
}
const CANDLES = candlePaths();

/* ---------- shared styles ---------- */

const base = css`
  * { box-sizing: border-box; }
  :host {
    display: block;
    font: 11px/14px Tahoma, "DejaVu Sans Condensed", "DejaVu Sans", sans-serif;
    color: #222;
  }
  button, input, select {
    font: inherit; color: inherit; margin: 0; padding: 0; border: 0; background: none;
  }
  .ico { display: block; flex: none; overflow: visible; }
`;

const brushed = css`
  .brushed {
    background-image:
      repeating-linear-gradient(118deg, rgba(255, 255, 255, 0.03) 0 1px, rgba(0, 0, 0, 0.01) 2px 3px, rgba(255, 255, 255, 0) 4px 7px),
      repeating-linear-gradient(90deg, rgba(255, 255, 255, 0.03) 0 2px, rgba(0, 0, 0, 0.01) 5px 7px, rgba(255, 255, 255, 0) 9px 13px);
  }
`;

/* ---------- header ---------- */

@customElement("app-header")
class AppHeader extends LitElement {
  static styles = [base, css`
    .head {
      display: flex; align-items: flex-start; height: 99px;
      background:
        repeating-linear-gradient(118deg, rgba(255, 255, 255, 0.05) 0 1px, rgba(0, 0, 0, 0.01) 2px 3px, rgba(255, 255, 255, 0) 4px 7px),
        linear-gradient(#e9e9e9, #c9c9c9 40%, #8f8f8f);
    }
    .logo { width: 188px; flex: none; padding-top: 24px; }
    .tools { display: flex; padding-top: 27px; }
    .tool { width: 50px; display: flex; flex-direction: column; align-items: center; gap: 4px; }
    .face {
      width: 42px; height: 41px; display: grid; place-items: center; border: 1px solid #666; border-radius: 4px;
      background: linear-gradient(#f0f2f1, #c4c8c7 50%, #a2a6a6); box-shadow: 0 1px 0 #ddd;
    }
    .face .ico, .cell .ico { filter: drop-shadow(0 1px 0 rgba(255, 255, 255, 0.8)); }
    .quick { display: flex; flex-direction: column; gap: 3px; padding: 16px 0 0 21px; }
    .row { display: flex; gap: 2px; }
    .q {
      display: flex; height: 31px; border: 1px solid #606060; border-radius: 5px; align-items: stretch;
      background: linear-gradient(#eceeed, #c6cac9 50%, #a2a6a6); box-shadow: 0 1px 0 #e2e2e2;
    }
    .cell { width: 31px; display: grid; place-items: center; border-right: 1px solid #6c6c6c; }
    .txt { padding: 0 8px; line-height: 29px; }
    .add { align-self: flex-start; font-size: 13px; margin-left: 5px; width: 12px; height: 16px; }
    .win { margin-left: auto; display: flex; padding: 3px 3px 0 0; }
    .win button { width: 21px; height: 16px; display: grid; place-items: center; }
  `];
  render() {
    return html`
      <header class="head">
        <div class="logo">
          <svg class="ico" width="186" height="50" viewBox="0 24 186 50" role="img" aria-label="Market Analyst">
            <defs>
              <linearGradient id="g" x1="0" y1="0" x2="0" y2="1"><stop offset="0" stop-color="#0c1450"/><stop offset=".45" stop-color="#3c6ab8"/><stop offset=".6" stop-color="#1a9ad4"/><stop offset="1" stop-color="#0a3a70"/></linearGradient>
              <radialGradient id="h"><stop offset="0" stop-color="#a8c8f0" stop-opacity=".9"/><stop offset="1" stop-color="#a8c8f0" stop-opacity="0"/></radialGradient>
            </defs>
            <path d="M5 48.500L38.500 32L72.500 48.500L38.500 65z" fill="url(#g)" stroke="#101a50" stroke-width=".8"/>
            <ellipse cx="38" cy="42" rx="18" ry="9" fill="url(#h)"/>
            <path fill="none" stroke="#e6f2ff" stroke-width="1" d="M24 40h29M17 45.500l7-5.500 14.500-6L53 40l8 5.500M14 50h49M18 54l20.500 6.500L60 54M38.500 33v30M24 40l15 9 14-9M14 50l24.500-11L63 50M24 40l-6 14M53 40l7 14M18 54l21-5 21 5M28 57l10.500-8L50 57zM38.500 34l-8 11-2 12M38.500 34l8 11 3 12"/>
            <g fill="#3b3b3b" font-family="Lato, sans-serif">
              <text x="70" y="43" font-size="17.500">MARKET</text>
              <text x="79" y="61" font-size="27">A</text><text x="99" y="61" font-size="18.500">NALYST</text>
              <text x="170" y="61" font-size="11" font-weight="700">®</text>
            </g>
          </svg>
        </div>
        <nav class="tools" aria-label="Main">
          ${TOOLS.map(([t, i]) => html`<button class="tool"><span class="face">${I[i]}</span><span>${t}</span></button>`)}
        </nav>
        <div class="quick">
          ${QUICK.map((r) => html`<div class="row">
            ${r.map(([t, i]) => html`<button class="q">${i ? html`<span class="cell">${I[i]}</span>` : nothing}<span class="txt">${t}</span></button>`)}
            <button class="add" aria-label="Add button">+</button>
          </div>`)}
        </div>
        <div class="win">
          <button aria-label="Info">${I.info}</button><button aria-label="Minimize">${I.min}</button>
          <button aria-label="Maximize">${I.max}</button><button aria-label="Close">${I.close}</button>
        </div>
      </header>`;
  }
}

/* ---------- tab bar ---------- */

@customElement("tab-bar")
class TabBar extends LitElement {
  static styles = [base, css`
    .bar { display: flex; gap: 1px; height: 29px; background: linear-gradient(#8f8f8f, #b8b8b8); }
    .group { display: flex; border: 1px solid #777; border-top-color: #444; border-radius: 0 5px 5px 0; background: linear-gradient(#e4e6e5, #b4b8b7); overflow: hidden; }
    .group.first { width: 78px; border-left: 0; }
    .group.last { width: 197px; border-radius: 5px; }
    .group button { flex: 1; display: grid; place-items: center; border-left: 1px solid #888; }
    .group button:first-child { border-left: 0; }
    .group.first button:first-child { flex: none; width: 21px; justify-content: start; }
    .group .ico { filter: drop-shadow(0 1px 0 rgba(255, 255, 255, 0.8)); }
    .group.first button:first-child .ico { margin-left: -2px; }
    .strip {
      flex: 1; min-width: 0; display: flex; flex-direction: column; border: 1px solid #444; border-bottom-color: #14288c;
      border-radius: 5px; background: linear-gradient(#f0f0f0, #a9a9a9 17px);
    }
    .tabs { height: 17px; display: flex; align-items: flex-end; padding-left: 7px; }
    .blue { flex: 1; border: 1px solid #14288c; border-bottom: 0; background: linear-gradient(#3c78d0, #4496f0); border-radius: 0 0 4px 4px; }
    .tab { display: flex; align-items: center; height: 17px; padding: 1px 0 0 33px; }
    .tab .close { width: 12px; height: 12px; margin: 0 5px 0 17px; }
    .tab:not(.on)::after { content: ""; width: 1px; height: 10px; background: #222; }
    .tab:nth-child(9)::after { display: none; }
    .tab:nth-child(9) .close { margin-right: 4px; }
    .on {
      height: 23px; color: #fff; border: 1px solid #1c3088; border-bottom: 0; border-radius: 5px 5px 0 0;
      background: linear-gradient(#4f74ff, #2a4ca8 55%, #3a72cc); box-shadow: 0 -1px 4px rgba(0, 0, 0, 0.5);
      margin-bottom: -1px; padding-top: 4px;
    }
    .on .xs { stroke: #1c3474; }
    .new { width: 20px; height: 13px; margin: 0 0 2px 4px; border: 1px solid #999; border-radius: 3px 9px 4px 4px; color: #888; line-height: 10px; }
  `];
  render() {
    return html`<div class="bar">
      <div class="group first"><button aria-label="Back">${I.back}</button><button aria-label="Forward">${I.fwd}</button><button aria-label="Home">${I.home}</button></div>
      <div class="strip">
        <div class="tabs">
          ${TABS.map((t, i) => html`<div class=${classMap({ tab: true, on: i === 9 })}><button>${t}</button><button class="close" aria-label="Close tab">${I.x}</button></div>`)}
          <button class="new" aria-label="New tab">+</button>
        </div>
        <div class="blue"></div>
      </div>
      <div class="group last">
        ${["left", "right", "tiles", "grid", "snap", "cycle", "find"].map((n) => html`<button aria-label=${n}>${I[n]}</button>`)}
      </div>
    </div>`;
  }
}

/* ---------- left side ---------- */

@customElement("side-panel")
class SidePanel extends LitElement {
  static styles = [base, brushed, css`
    :host { display: flex; align-items: flex-start; flex: none; border-right: 1px solid #999; }
    .strip {
      margin-top: 6px; width: 37px; padding: 8px 0 5px; background-color: #b6b6b6; border-radius: 0 5px 5px 0;
      border: solid #ececec; border-width: 0 2px 2px 0; overflow: hidden;
    }
    .set { display: flex; flex-direction: column; gap: 5px; }
    .set + .set { margin-top: 9px; }
    .set + .set::before { content: ""; height: 2px; margin: 0 7px 3px 0; background: linear-gradient(#6b6b6b 50%, #f2f2f2 50%); }
    .b {
      width: 34px; height: 33px; margin-left: -4px; display: grid; place-items: center; border: 1px solid #5c5c5c; border-radius: 4px;
      background: linear-gradient(#f0f2f1, #c0c4c3 55%, #a4a8a8); box-shadow: 0 1px 0 #ddd;
    }
    .dark { background: linear-gradient(#4a4a4a, #5c5c5c 60%, #727272); }
    .side { width: 261px; padding: 3px 11px 0 12px; }
    h2 { margin: 0 0 0 11px; font-size: 11px; line-height: 14px; color: #000; }
    .acts { margin-top: 10px; }
    .panel {
      margin: 3px 0 7px; padding: 2px 6px 15px; background-color: #b6b6b6; border-radius: 5px; border: 3px solid #b0b0b0;
      border-color: #a8acab #ececec #ececec #a2a2a2;
    }
    .panel.p2 { margin-top: 4px; }
    .line {
      display: grid; grid-template-columns: 97px 1fr; align-items: center; height: 24px; width: 100%; text-align: left; padding-left: 1px;
      border-bottom: 1px solid #666; box-shadow: 0 1px 0 #f2f2f2; color: #2a2a2a;
    }
    .line.act { display: flex; justify-content: space-between; padding-right: 1px; }
    .val { display: grid; grid-template-columns: 1fr 16px; align-items: center; justify-items: start; }
    .val > * { grid-row: 1; }
    .val .ico { grid-column: 2; justify-self: center; pointer-events: none; }
    select, .num { appearance: none; -moz-appearance: textfield; grid-column: 1 / 3; width: 100%; outline: 0; }
    .num::-webkit-inner-spin-button { appearance: none; }
    .box { appearance: none; grid-column: 2; width: 12px; height: 12px; border: 1px solid #6c6c6c; border-radius: 2px; justify-self: center; margin-top: 2px; }
  `];
  private field(p: Prop, i: number) {
    const id = `f${i}`;
    if (p.kind === "text") return html`<output id=${id}>${p.value}</output>`;
    if (p.kind === "select") return html`<span class="val"><select id=${id}><option>${p.value}</option></select>${I.chevD}</span>`;
    if (p.kind === "number") return html`<span class="val"><input class="num" id=${id} type="number" .value=${p.value}>${I.spin}</span>`;
    return html`<span class="val"><input class="box" id=${id} type="checkbox" .checked=${p.value === "on"}>${p.value ? I.tick : nothing}</span>`;
  }
  render() {
    return html`
      <div class="strip brushed">
        ${STRIP.map((s) => html`<div class="set">${s.map((n) => {
          const key = n.replace("!", "");
          return html`<button class=${classMap({ b: true, dark: n.endsWith("!") })} aria-label=${key}>${I[key]}</button>`;
        })}</div>`)}
      </div>
      <div class="side">
        <h2>Workbook: huy</h2>
        <h2 class="acts">Actions</h2>
        <div class="panel brushed">
          ${ACTIONS.map((a) => html`<button class="line act"><span>${a}</span>${a === "Send To" ? I.chevR : nothing}</button>`)}
        </div>
        <h2>Properties</h2>
        <div class="panel p2 brushed">
          ${PROPS.map((p, i) => html`<div class="line"><label for=${`f${i}`}>${p.label}</label>${this.field(p, i)}</div>`)}
        </div>
      </div>`;
  }
}

/* ---------- chart ---------- */

@customElement("price-chart")
class PriceChart extends LitElement {
  static styles = [base, brushed, css`
    :host { display: flex; flex-direction: column; flex: 1; min-width: 0; padding: 0 8px 0 9px; color: #000; }
    .title { display: flex; align-items: center; height: 16px; padding-left: 5px; flex: none; }
    .title .win { margin-left: auto; display: flex; margin-right: -5px; }
    .win button { width: 21px; height: 14px; display: grid; place-items: center; }
    .frame {
      flex: 1; min-height: 0; display: flex; flex-direction: column; border: 3px solid; border-color: #b0b0b0 #ededed #ededed #a6a6a6; border-radius: 4px;
    }
    .history {
      position: relative; height: 48px; flex: none; overflow: hidden; border: solid #0a2078; border-width: 1px 0;
      background: linear-gradient(#001cb4, #0a34d0 35%, #4296ff);
    }
    .history svg, .plot svg { position: absolute; inset: 0; width: 100%; height: 100%; display: block; }
    .year { position: absolute; top: 0; padding-left: 3px; color: rgba(255, 255, 255, 0.62); }
    .body { flex: 1; min-height: 0; display: flex; }
    .plot { position: relative; flex: 1; min-width: 0; background: linear-gradient(#fff, #cbcbcb); overflow: hidden; }
    .lvl { position: absolute; white-space: pre; transform: translateY(-12px); }
    .green { color: #008000; } .blue { color: #0000ff; } .red { color: #ff0000; }
    .scale { position: relative; width: 79px; flex: none; background-color: #b7b7b7; border-left: 1px solid #777; }
    .p { position: absolute; left: 0; display: flex; align-items: center; height: 14px; transform: translateY(-7px); }
    .p::before { content: ""; width: 3px; height: 1px; background: #000; margin-right: 5px; }
    .p.big::before { width: 7px; margin-right: 1px; }
    .lk { position: absolute; right: 0; top: 0; width: 28px; height: 27px; display: grid; place-items: center; border: 1px solid #777; border-radius: 4px; background: linear-gradient(#eceeed, #a8acac); }
    .lk .ico { width: 20px; height: 20px; }
    .grab { position: absolute; right: 0; top: 46.500%; width: 12px; height: 30px; border: 1px solid #999; border-right: 0; border-radius: 4px 0 0 4px; display: grid; place-items: center; background: #bcbcbc; }
    .foot { display: flex; height: 18px; flex: none; border-top: 1px solid #808080; background: #d0d0d0; }
    .months { flex: 1; min-width: 0; display: flex; }
    .m { flex: 1 1 0; min-width: 0; text-align: center; line-height: 15px; border-left: 1px solid #808080; }
    .m:first-child { border-left: 0; }
    .ratio { width: 79px; flex: none; display: flex; justify-content: flex-end; padding: 1px 0; }
    .rb { display: flex; align-items: center; border: 1px solid #555; border-radius: 4px; background: linear-gradient(#eee, #aaa); line-height: 13px; }
    .rb span { padding: 0 3px 0 2px; border-right: 1px solid #777; }
    .rb small { font-size: 8px; padding-left: 3px; }
    .status { display: flex; justify-content: space-between; height: 19px; line-height: 14px; padding-left: 3px; flex: none; white-space: nowrap; }
    .grip { align-self: flex-end; margin-right: -7px; }
  `];
  render() {
    const prices = Array.from({ length: 53 }, (_, i) => 1250 - i * 10);
    return html`
      <div class="title">
        <span>Chi so VN-INDEX - VNINDEX (MS 11) - 1 Day CandleStick Chart - USD - No Layout</span>
        <div class="win">${["diamond", "pin", "info", "max", "close"].map((n) => html`<button aria-label=${n}>${I[n]}</button>`)}</div>
      </div>
      <div class="frame">
        <div class="history">
          <svg viewBox="311 149 1589 46" preserveAspectRatio="none" aria-hidden="true">
            ${YEARS.slice(1).map(([, x]) => svg`<path d=${`M${x + 0.5} 149V195`} stroke="#082880" stroke-opacity=".7"/><path d=${`M${x + 1.5} 149V195`} stroke="#fff" stroke-opacity=".35"/>`)}
            <polyline points=${HISTORY} fill="none" stroke="#d4e0ff" stroke-opacity=".8" stroke-width="1.500"/>
            <rect x="1673" y="149" width="166" height="22" fill="#fff" fill-opacity=".36"/>
            <rect x="1673" y="171" width="166" height="24" fill="#fff" fill-opacity=".22"/>
            <path d="M1756.500 157V188" stroke="#10308c" stroke-opacity=".7"/>
            <path d="M1675.500 167v11M1677.500 167v11M1679.500 167v11M1832.500 167v11M1834.500 167v11M1836.500 167v11" stroke="#1c3c90" stroke-opacity=".6"/>
          </svg>
          ${YEARS.map(([t, x]) => html`<span class="year" style=${styleMap({ left: pct(x, HX, HW) })}>${t}</span>`)}
        </div>
        <div class="body">
          <div class="plot">
            <svg viewBox=${`${PX} ${PY} ${PW} ${PH}`} preserveAspectRatio="none" shape-rendering="crispEdges" role="img" aria-label="Daily candles">
              <path d=${CANDLES.solid} fill="#000"/>
              <path d=${CANDLES.open} fill="#f4f4f4" stroke="#000"/>
              ${LEVELS.map(([y, c]) => svg`<path d=${`M755 ${y + 0.5}H1526`} stroke=${INK[c]}/>`)}
              ${ZONES.map(([x, y, w, h]) => svg`<rect x=${x + 0.5} y=${y + 0.5} width=${w} height=${h} fill="#008000" fill-opacity=".5" stroke="#008000"/>`)}
            </svg>
            ${LEVELS.map(([y, c, t]) => html`<span class=${`lvl ${c}`} style=${styleMap({ left: pct(1530, PX, PW), top: pct(y, PY, PH) })}>${t}</span>`)}
          </div>
          <div class="scale brushed">
            ${prices.map((p) => html`<span class=${classMap({ p: true, big: p % 100 === 0 })} style=${styleMap({ top: pct(Math.round(priceY(p)), PY, PH) })}>${p.toFixed(2)}</span>`)}
            <button class="lk" aria-label="Lock scale">${I.lock}</button>
            <button class="grab" aria-label="Collapse panel">${icon(8, 12, svg`<path fill="none" stroke="#888" stroke-width="2.400" d="M6 2L2.500 6 6 10"/>`)}</button>
          </div>
        </div>
        <div class="foot">
          <div class="months">${MONTHS.map(([t, w]) => html`<span class="m" style=${styleMap({ flexGrow: String(w) })}>${t}</span>`)}</div>
          <div class="ratio"><button class="rb"><span>2.044</span><small>XY</small>${icon(12, 12, svg`<path fill="#333" d="M2 6h9v6H2z"/><path fill="none" stroke="#333" stroke-width="1.600" d="M5.500 3q0-2 2-2t2 2v4"/><path fill="#ddd" d="M6 8h1v2H6z"/>`)}</button></div>
        </div>
      </div>
      <div class="status">
        <span>Date: Friday, September 1, 2017 Open: 784.42 High: 789.19 Low: 784.18 Close: 788.73 Range: 5.01 Volume: 137,922,112 Position: 4101 Cursor Value : 747.99</span>
        <svg class="grip" width="14" height="14" viewBox="0 0 14 14" aria-hidden="true"><path stroke="#888" stroke-width="1.500" d="M1 14L14 1M6 14l8-8M10 14l4-4"/></svg>
      </div>`;
  }
}

/* ---------- root ---------- */

@customElement("app-root")
class AppRoot extends LitElement {
  static styles = [base, css`
    :host { min-height: 100vh; display: flex; flex-direction: column; background: #d0d0d0; }
    .desk { flex: 1; display: flex; }
    .window { flex: 1; min-width: 0; display: flex; flex-direction: column; border-bottom: 1px solid #808080; }
    .work { flex: 1; display: flex; border-top: 1px solid #e4e4e4; }
    .behind { width: 4px; flex: none; border-left: 1px solid #888; background: linear-gradient(#eee 31px, #f08000 31px 65px, #f4f4f4 65px 140px, #aaa 140px 141px, #f4f4f4 141px 172px, #aaa 172px 173px, #e8e8e8 173px); }
    .taskbar { height: 5px; display: flex; background: #101010; }
    .taskbar .pale { width: 20%; background: #f2f2f2; }
    .taskbar .lit { margin-left: 33.400%; width: 47px; background: #a86434; }
  `];
  render() {
    return html`
      <div class="desk">
        <div class="window">
          <app-header></app-header>
          <tab-bar></tab-bar>
          <div class="work"><side-panel></side-panel><price-chart></price-chart></div>
        </div>
        <div class="behind"></div>
      </div>
      <div class="taskbar"><div class="pale"></div><div class="lit"></div></div>`;
  }
}
